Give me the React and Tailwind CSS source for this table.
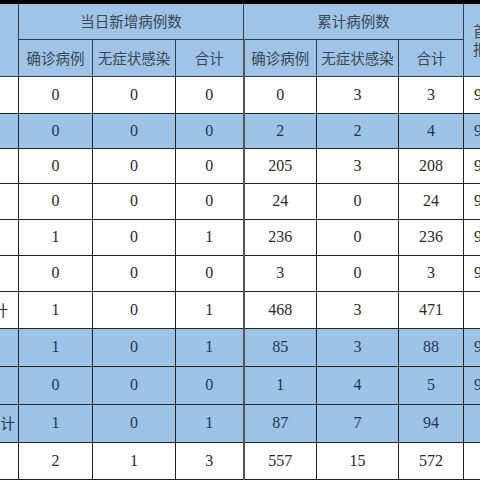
const rows = [
  { label: '', v: ['0', '0', '0', '0', '3', '3'], last: '98.1%', blue: false },
  { label: '', v: ['0', '0', '0', '2', '2', '4'], last: '96.3%', blue: true },
  { label: '', v: ['0', '0', '0', '205', '3', '208'], last: '97.2%', blue: false },
  { label: '', v: ['0', '0', '0', '24', '0', '24'], last: '95.8%', blue: false },
  { label: '', v: ['1', '0', '1', '236', '0', '236'], last: '96.6%', blue: false },
  { label: '', v: ['0', '0', '0', '3', '0', '3'], last: '94.4%', blue: false },
  { label: '省内合计', v: ['1', '0', '1', '468', '3', '471'], last: '', blue: false, pr: 'pr-[10px]' },
  { label: '', v: ['1', '0', '1', '85', '3', '88'], last: '97.0%', blue: true },
  { label: '', v: ['0', '0', '0', '1', '4', '5'], last: '92.6%', blue: true },
  { label: '外省合计', v: ['1', '0', '1', '87', '7', '94'], last: '', blue: true, pr: 'pr-[3px]' },
  { label: '', v: ['2', '1', '3', '557', '15', '572'], last: '', blue: false },
]

const heights = ['h-[37px]', 'h-[35px]', 'h-[35px]', 'h-[36px]', 'h-[36px]', 'h-[36px]', 'h-[37px]', 'h-[38px]', 'h-[38px]', 'h-[38px]', 'h-[37px]']

const cjk = { fontFamily: '"Noto Sans CJK SC", "Noto Sans", sans-serif' }
const num = { fontFamily: '"Liberation Serif", "Noto Sans CJK SC", serif' }

export default function App() {
  return (
    <div className="w-[480px] h-[480px] overflow-hidden bg-white">
      <div className="h-[4px] bg-black" />
      <table className="table-fixed border-collapse ml-[-60px] w-[640px]">
        <colgroup>
          <col className="w-[78px]" />
          <col className="w-[74px]" />
          <col className="w-[83px]" />
          <col className="w-[68px]" />
          <col className="w-[73px]" />
          <col className="w-[82px]" />
          <col className="w-[65px]" />
          <col className="w-[117px]" />
        </colgroup>
        <thead>
          <tr className="h-[35px] bg-[#9fc4e7]" style={cjk}>
            <th rowSpan={2} className="border border-[#2e3f52] border-t-0 font-normal" />
            <th colSpan={3} className="border border-[#2e3f52] border-t-0 font-normal text-[14.5px] text-[#3b4756]">
              当日新增病例数
            </th>
            <th colSpan={3} className="border border-[#2e3f52] border-t-0 font-normal text-[14.5px] text-[#3b4756]">
              累计病例数
            </th>
            <th rowSpan={2} className="border border-[#2e3f52] border-t-0 font-normal text-[14.5px] text-[#3b4756] text-left pl-[9px] leading-[18px] align-middle">
              首例<br />报告时间
            </th>
          </tr>
          <tr className="h-[37px] bg-[#9fc4e7]" style={cjk}>
            {['确诊病例', '无症状感染', '合计', '确诊病例', '无症状感染', '合计'].map((t, i) => (
              <th
                key={i}
                className={`border border-[#2e3f52] font-normal text-[14.5px] text-[#3b4756] whitespace-nowrap ${i === 2 ? 'border-r-2 border-r-[#555]' : ''}`}
              >
                {t}
              </th>
            ))}
          </tr>
        </thead>
        <tbody>
          {rows.map((r, ri) => (
            <tr
              key={ri}
              className={`${heights[ri]} ${r.blue ? 'bg-[#9dc3e6] text-[#1f3558]' : 'bg-white text-[#2a2a2a]'}`}
            >
              <td
                className={`border border-[#222] text-right whitespace-nowrap text-[14.5px] ${r.pr || 'pr-2'}`}
                style={cjk}
              >
                {r.label}
              </td>
              {r.v.map((v, i) => (
                <td
                  key={i}
                  className={`border border-[#222] text-center text-[16px] ${i === 2 ? 'border-r-2 border-r-[#555]' : ''}`}
                  style={num}
                >
                  {v}
                </td>
              ))}
              <td className="border border-[#222] text-left pl-[10px] text-[16px]" style={num}>
                {r.last}
              </td>
            </tr>
          ))}
        </tbody>
      </table>
    </div>
  )
}
